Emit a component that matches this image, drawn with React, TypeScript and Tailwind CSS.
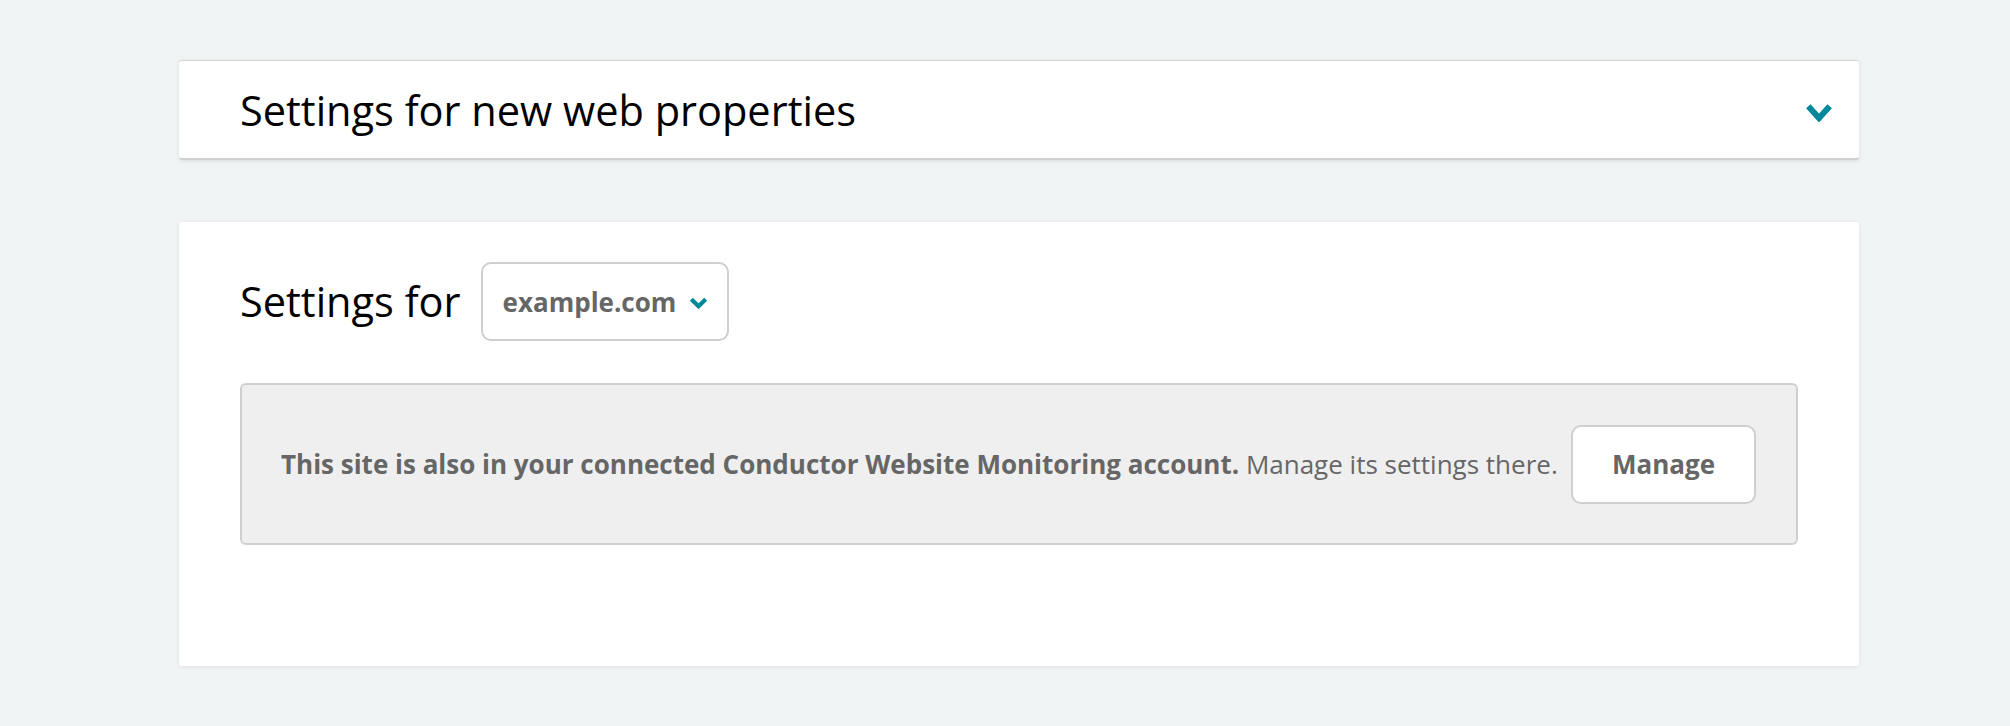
import React from "react";

function Chevron({ className, w, h, sw }: { className?: string; w: number; h: number; sw: number }) {
  return (
    <svg width={w} height={h} viewBox={`0 0 ${w} ${h}`} className={className} fill="none">
      <polyline
        points={`${sw * 0.55},${sw * 0.55} ${w / 2},${h - sw * 0.65} ${w - sw * 0.55},${sw * 0.55}`}
        stroke="#00899b"
        strokeWidth={sw}
        strokeLinecap="butt"
        strokeLinejoin="miter"
      />
    </svg>
  );
}

export default function App() {
  return (
    <div
      className="min-h-[726px] w-full bg-[#f0f4f5] pl-[179px] pr-[151px] pt-[60px] pb-[60px] flex flex-col gap-[62px]"
      style={{ fontFamily: '"Open Sans", "Noto Sans", sans-serif' }}
    >
      <div className="h-[100px] bg-white rounded-[3px] border-t border-t-[#d4d4d4] border-b-2 border-b-[#d0d0d0] shadow-[0_1px_4px_rgba(0,0,0,0.1)] flex items-center justify-between pl-[61px] pr-[26px]">
        <h2 className="text-[41.5px] leading-none text-black font-normal pt-[2px]">Settings for new web properties</h2>
        <Chevron w={28} h={19} sw={6} className="mt-[5px] shrink-0" />
      </div>

      <div className="h-[444px] bg-white rounded-[3px] shadow-[0_1px_4px_rgba(0,0,0,0.08)] pl-[61px] pr-[61px] pt-[40px] flex flex-col">
        <div className="flex items-center gap-[20px]">
          <span className="text-[41.5px] leading-none text-black font-normal">Settings for</span>
          <div className="h-[79px] border-2 border-[#cfcfcf] rounded-[10px] flex items-center pl-[20px] pr-[19px] gap-[13px]">
            <span className="text-[26px] font-bold text-[#666666] leading-none">example.com</span>
            <Chevron w={19} h={12} sw={4.2} className="mt-[2px] shrink-0" />
          </div>
        </div>

        <div className="mt-[42px] h-[162px] bg-[#efefef] border-2 border-[#cfcfcf] rounded-[6px] flex items-center pl-[39px] pr-[40px] gap-[12px]">
          <p className="flex-1 text-[26px] text-[#666666] leading-none whitespace-nowrap">
            <span className="font-bold">This site is also in your connected Conductor Website Monitoring account.</span>{" "}
            <span className="font-normal">Manage its settings there.</span>
          </p>
          <button className="shrink-0 h-[79px] w-[185px] bg-white border-2 border-[#cfcfcf] rounded-[10px] text-[26px] font-bold text-[#666666] leading-none">
            Manage
          </button>
        </div>
      </div>
    </div>
  );
}
